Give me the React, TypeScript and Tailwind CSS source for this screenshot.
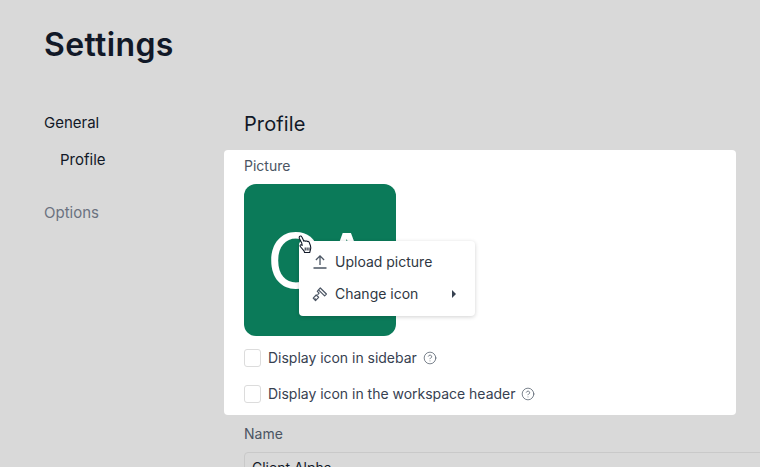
import { CircleHelp } from 'lucide-react'

function UploadIcon() {
  return (
    <svg width="16" height="16" viewBox="0 0 16 16" fill="none" stroke="#4b5563" strokeWidth="1.3" className="shrink-0">
      <path d="M8 11V2M3.900 6 8 1.900 12.100 6M1.500 14h13" />
    </svg>
  )
}

function RollerIcon() {
  return (
    <svg width="16" height="16" viewBox="0 0 16 16" fill="none" stroke="#4b5563" strokeWidth="1.2" strokeLinejoin="round" className="shrink-0">
      <path d="M8.300 2 14.400 8l-1.800 1.900-6.100-6z" />
      <path d="M6.500 4 5.300 5.300l1.800 1.800-1.600 1.700" />
      <path d="M1.200 12.200 4.200 9l2.400 2.300-3.100 3.300z" />
      <path d="M2.600 12.400 4.300 14" />
    </svg>
  )
}

function HandCursor() {
  return (
    <svg width="15" height="20" viewBox="0 0 15 20" className="absolute left-[298px] top-[235px] z-20">
      <path
        d="M1.600 1.400c.8-.8 1.900-.3 2.300.6l2 4.200c.3-.7 1.400-.6 1.800.1.400-.5 1.400-.4 1.700.3.500-.4 1.400-.2 1.700.5l1.300 3.400c.6 1.700.5 3.600-.2 5.200l-.5 1.800H6.600l-.6-1.600L2.700 12c-.6-.8-1-1.600-.3-2.100.5-.4 1.200-.1 1.800.5L3.700 8 1.300 3.200c-.2-.7-.1-1.300.3-1.800z"
        fill="#ffffff"
        stroke="#111827"
        strokeWidth="1.100"
        strokeLinejoin="round"
      />
      <path d="M7.200 12.500v3M9.100 12.500v3M11 12.500v3" stroke="#111827" strokeWidth="1" />
    </svg>
  )
}

function CheckRow({ label }: { label: string }) {
  return (
    <label className="flex h-[20px] items-center">
      <span className="h-[18px] w-[17px] rounded-[3px] border border-[#dcdcdc] bg-white" />
      <span className="ml-[7px] text-[14px] leading-5 tracking-[-0.02px] text-[#374151]">{label}</span>
      <CircleHelp className="ml-[6px] h-[14px] w-[14px] text-[#4b5563]" strokeWidth={1.25} />
    </label>
  )
}

export default function App() {
  return (
    <div className="relative h-[467px] w-[760px] overflow-hidden bg-[#d9d9d9] pl-[44px] pt-[25px] font-['Inter',sans-serif]">
      <h1 className="text-[32px] font-semibold leading-10 tracking-[0.35px] text-[#111827]">Settings</h1>

      <div className="mt-[47px] flex">
        <nav className="w-[200px] shrink-0 pt-px text-[15px] leading-5">
          <div className="text-[#111827]">General</div>
          <div className="mt-[17px] pl-4 text-[#111827]">Profile</div>
          <div className="mt-[33px] text-[#6b7280]">Options</div>
        </nav>

        <main className="w-[600px] shrink-0">
          <h2 className="text-[20px] font-normal leading-6 tracking-[0.1px] text-[#111827]">Profile</h2>

          <section className="-ml-5 mt-[14px] h-[265px] w-[512px] rounded-[4px] bg-white pl-5 pt-[6px]">
            <div className="text-[14px] leading-5 text-[#4b5563]">Picture</div>
            <div className="mt-2 flex h-[152px] w-[152px] items-center justify-center rounded-xl bg-[#0b7a59] text-[76px] leading-none text-white">
              CA
            </div>
            <div className="mt-3 flex flex-col gap-4">
              <CheckRow label="Display icon in sidebar" />
              <CheckRow label="Display icon in the workspace header" />
            </div>
          </section>

          <div className="mt-[9px] text-[14px] leading-5 text-[#4b5563]">Name</div>
          <div className="mt-2 h-[36px] rounded-[4px] border border-[#c9c9c9] pl-[7px] pt-[5px] text-[14px] leading-5 text-[#111827]">
            Client Alpha
          </div>
        </main>
      </div>

      <div className="absolute left-[299px] top-[241px] z-10 flex h-[75px] w-[176px] flex-col justify-center rounded-[4px] bg-white pb-[2px] pl-[13px] pr-[13px] shadow-[0_1px_4px_rgba(0,0,0,0.18)]">
        <div className="flex h-8 items-center gap-[7px] text-[14px] text-[#2f3742]">
          <UploadIcon />
          Upload picture
        </div>
        <div className="flex h-8 items-center gap-[7px] text-[14px] text-[#2f3742]">
          <RollerIcon />
          Change icon
          <span className="ml-auto mr-[6px] h-0 w-0 border-y-[4px] border-l-[4px] border-y-transparent border-l-[#374151]" />
        </div>
      </div>

      <HandCursor />
    </div>
  )
}
